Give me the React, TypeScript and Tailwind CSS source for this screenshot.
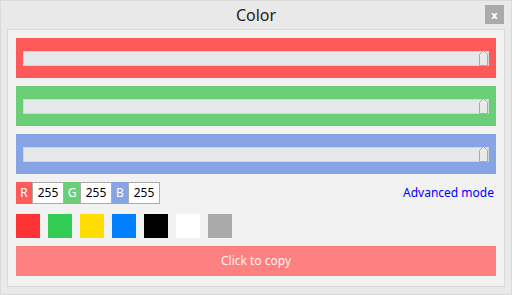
import { useState } from "react";

const bars = [
  { key: "r", bg: "bg-[#ff5a5a]" },
  { key: "g", bg: "bg-[#6bcf77]" },
  { key: "b", bg: "bg-[#87a5e5]" },
];

const swatches = [
  "bg-[#ff3333]",
  "bg-[#33cc55]",
  "bg-[#ffdd00]",
  "bg-[#0080ff]",
  "bg-[#000000]",
  "bg-[#ffffff]",
  "bg-[#aaaaaa]",
];

const Thumb = () => (
  <svg width="9" height="16" viewBox="0 0 9 16" className="absolute right-0 top-[-2px]">
    <path d="M0.5 15.5 V4.5 L4.5 0.5 L8.5 4.5 V15.5 Z" fill="#e9eaea" stroke="#a9a9a9" strokeWidth={1} />
  </svg>
);

function Slider({ bg }: { bg: string }) {
  return (
    <div className={`h-[40px] ${bg} flex items-center px-[7px] pt-[1px]`}>
      <div className="relative h-[15px] w-full bg-[#e6e9e9] border border-[#d4d6d6]">
        <Thumb />
      </div>
    </div>
  );
}

export default function App() {
  const [value] = useState({ r: 255, g: 255, b: 255 });

  const channels = [
    { label: "R", bg: "bg-[#ff5a5a]", v: value.r },
    { label: "G", bg: "bg-[#6bcf77]", v: value.g },
    { label: "B", bg: "bg-[#87a5e5]", v: value.b },
  ];

  return (
    <div
      className="w-[512px] h-[295px] bg-[#e9e9e9] border border-[#dadada] flex flex-col"
      style={{ fontFamily: '"Noto Sans", "Open Sans", sans-serif' }}
    >
      {/* Title bar */}
      <div className="relative h-[28px] flex items-center justify-center">
        <span className="text-[16px] text-[#222] leading-none">Color</span>
        <button className="absolute right-[7px] top-[4px] w-[19px] h-[19px] bg-[#aaaaaa] text-white text-[11px] font-bold leading-none flex items-center justify-center">
          x
        </button>
      </div>

      {/* Panel */}
      <div className="mx-[6px] border border-[#dadada] bg-[#f2f2f2] px-[8px] pt-[8px] pb-[10px] flex flex-col">
        <div className="flex flex-col gap-[8px]">
          {bars.map((b) => (
            <Slider key={b.key} bg={b.bg} />
          ))}
        </div>

        <div className="mt-[8px] h-[22px] flex items-center">
          {channels.map((c) => (
            <div key={c.label} className="flex h-[22px]">
              <div className={`w-[16px] ${c.bg} text-white text-[12px] flex items-center justify-center`}>
                {c.label}
              </div>
              <div className="w-[32px] bg-white border border-[#aaaaaa] text-[12px] text-black flex items-center justify-center">
                {c.v}
              </div>
            </div>
          ))}
          <a className="ml-auto mr-[2px] text-[12px] text-[#0000ff] cursor-pointer">Advanced mode</a>
        </div>

        <div className="mt-[10px] flex gap-[8px]">
          {swatches.map((s) => (
            <div key={s} className={`w-[24px] h-[24px] ${s}`} />
          ))}
        </div>

        <button className="mt-[8px] h-[30px] w-full bg-[#ff8080] text-[#fff3f6] text-[12px] flex items-center justify-center">
          Click to copy
        </button>
      </div>
    </div>
  );
}
